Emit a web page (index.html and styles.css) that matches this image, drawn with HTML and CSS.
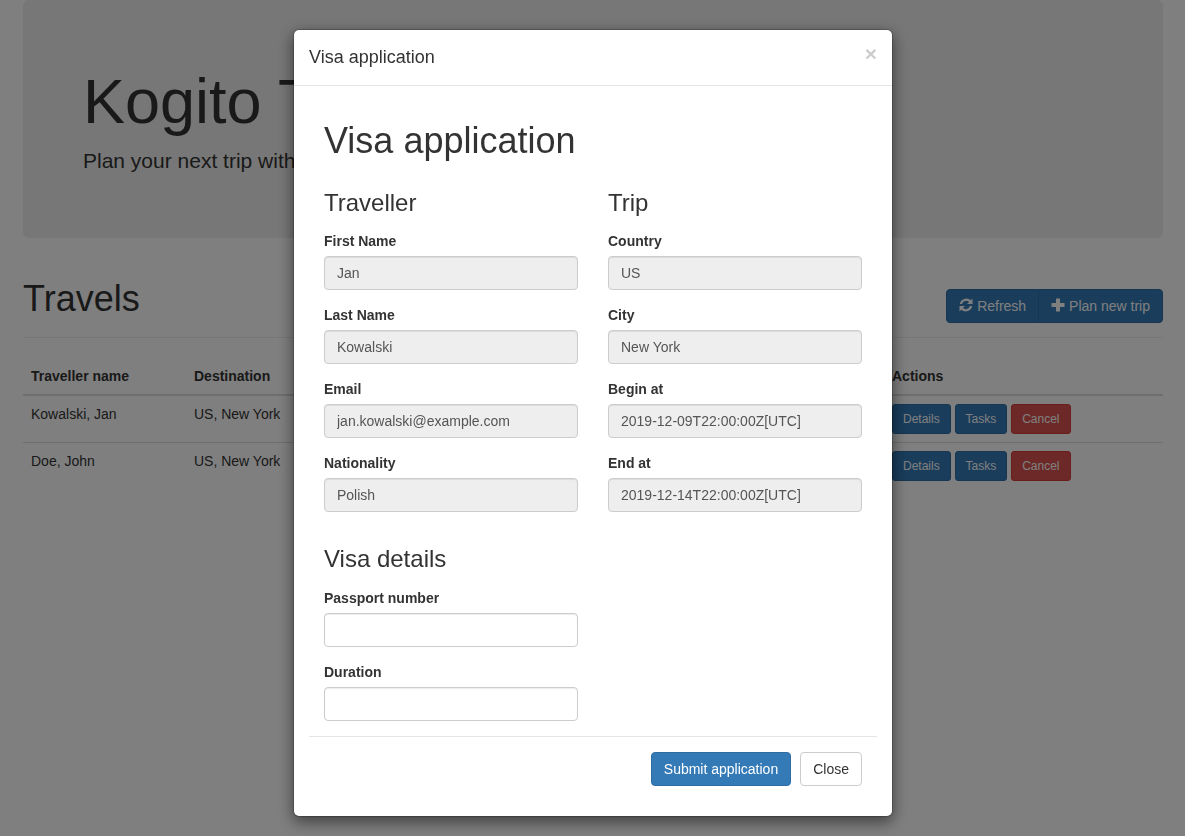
FILE: index.html
```html
<!DOCTYPE html>
<html lang="en">
<head>
    <meta charset="UTF-8">
    <meta name="viewport" content="width=device-width, initial-scale=1.0">
    <title>Kogito Travel Agency</title>
    <link rel="stylesheet" href="styles.css">
</head>
<body>
    <div class="container">
        <div class="jumbotron">
            <h1>Kogito T</h1>
            <p>Plan your next trip with</p>
        </div>

        <div class="page-header">
            <h1>Travels</h1>
            <div class="btn-group">
                <button type="button" class="btn btn-primary">
                    <svg class="glyph" viewBox="0 0 14 14"><path d="M13.5.5V6H8l2.100-2.100A4.400 4.400 0 0 0 3 5.900H.8A6.600 6.600 0 0 1 11.700 2.300z"/><path d="M.5 13.500V8H6l-2.100 2.100A4.400 4.400 0 0 0 11 8.100h2.200A6.600 6.600 0 0 1 2.300 11.700z"/></svg>
                    Refresh
                </button>
                <button type="button" class="btn btn-primary">
                    <svg class="glyph" viewBox="0 0 14 14"><path d="M5 .5h4v4.500h4.500v4H9v4.500H5V9H.5V5H5z"/></svg>
                    Plan new trip
                </button>
            </div>
        </div>

        <table class="table">
            <thead>
                <tr>
                    <th class="col-name">Traveller name</th>
                    <th class="col-dest">Destination</th>
                    <th class="col-dates">Departure</th>
                    <th class="col-actions">Actions</th>
                </tr>
            </thead>
            <tbody>
                <tr>
                    <td>Kowalski, Jan</td>
                    <td>US, New York</td>
                    <td>2019-12-09</td>
                    <td class="actions">
                        <button type="button" class="btn btn-sm btn-primary">Details</button>
                        <button type="button" class="btn btn-sm btn-primary">Tasks</button>
                        <button type="button" class="btn btn-sm btn-danger">Cancel</button>
                    </td>
                </tr>
                <tr>
                    <td>Doe, John</td>
                    <td>US, New York</td>
                    <td>2019-12-09</td>
                    <td class="actions">
                        <button type="button" class="btn btn-sm btn-primary">Details</button>
                        <button type="button" class="btn btn-sm btn-primary">Tasks</button>
                        <button type="button" class="btn btn-sm btn-danger">Cancel</button>
                    </td>
                </tr>
            </tbody>
        </table>
    </div>

    <div class="modal-backdrop"></div>

    <div class="modal">
        <div class="modal-content">
            <div class="modal-header">
                <button type="button" class="close">&times;</button>
                <h4 class="modal-title">Visa application</h4>
            </div>
            <div class="modal-body">
                <form>
                    <div class="form-inner">
                        <h1>Visa application</h1>
                        <div class="form-columns">
                            <div>
                                <h3>Traveller</h3>
                                <div class="form-group">
                                    <label for="firstName">First Name</label>
                                    <input type="text" id="firstName" class="form-control" value="Jan" readonly>
                                </div>
                                <div class="form-group">
                                    <label for="lastName">Last Name</label>
                                    <input type="text" id="lastName" class="form-control" value="Kowalski" readonly>
                                </div>
                                <div class="form-group">
                                    <label for="email">Email</label>
                                    <input type="text" id="email" class="form-control" value="jan.kowalski@example.com" readonly>
                                </div>
                                <div class="form-group">
                                    <label for="nationality">Nationality</label>
                                    <input type="text" id="nationality" class="form-control" value="Polish" readonly>
                                </div>
                            </div>
                            <div>
                                <h3>Trip</h3>
                                <div class="form-group">
                                    <label for="country">Country</label>
                                    <input type="text" id="country" class="form-control" value="US" readonly>
                                </div>
                                <div class="form-group">
                                    <label for="city">City</label>
                                    <input type="text" id="city" class="form-control" value="New York" readonly>
                                </div>
                                <div class="form-group">
                                    <label for="beginAt">Begin at</label>
                                    <input type="text" id="beginAt" class="form-control" value="2019-12-09T22:00:00Z[UTC]" readonly>
                                </div>
                                <div class="form-group">
                                    <label for="endAt">End at</label>
                                    <input type="text" id="endAt" class="form-control" value="2019-12-14T22:00:00Z[UTC]" readonly>
                                </div>
                            </div>
                        </div>
                        <div class="form-columns visa-details">
                            <div>
                                <h3>Visa details</h3>
                                <div class="form-group">
                                    <label for="passport">Passport number</label>
                                    <input type="text" id="passport" class="form-control">
                                </div>
                                <div class="form-group">
                                    <label for="duration">Duration</label>
                                    <input type="text" id="duration" class="form-control">
                                </div>
                            </div>
                        </div>
                    </div>
                    <div class="modal-footer">
                        <button type="button" class="btn btn-primary">Submit application</button>
                        <button type="button" class="btn btn-default">Close</button>
                    </div>
                </form>
            </div>
        </div>
    </div>
</body>
</html>
```

FILE: styles.css
```css
* {
    box-sizing: border-box;
}
body {
    margin: 0;
    font-family: "Liberation Sans", Arial, sans-serif;
    font-size: 14px;
    line-height: 20px;
    color: #333;
    background-color: #fff;
    overflow: hidden;
}
h1, h3, h4, p {
    font-weight: 500;
    margin: 0;
}
.container {
    width: 1140px;
    margin-left: 23px;
}
.jumbotron {
    height: 238px;
    padding: 67px 60px 0;
    background-color: #eee;
    border-radius: 6px;
}
.jumbotron h1 {
    font-size: 63px;
    line-height: 69px;
    margin-bottom: 10px;
}
.jumbotron p {
    font-size: 21px;
    font-weight: 200;
    line-height: 30px;
}
.page-header {
    display: flex;
    justify-content: space-between;
    align-items: flex-start;
    margin: 40px 0 20px;
    padding-bottom: 9px;
    border-bottom: 1px solid #eee;
}
.page-header h1 {
    font-size: 36px;
    line-height: 40px;
    margin: 1px 0 9px;
}
.btn {
    display: inline-block;
    padding: 6px 12px;
    font-family: inherit;
    font-size: 14px;
    line-height: 20px;
    border: 1px solid transparent;
    border-radius: 4px;
    white-space: nowrap;
    cursor: pointer;
}
.btn-primary {
    color: #fff;
    background-color: #337ab7;
    border-color: #2e6da4;
}
.btn-danger {
    color: #fff;
    background-color: #d9534f;
    border-color: #d43f3a;
}
.btn-default {
    color: #333;
    background-color: #fff;
    border-color: #ccc;
}
.btn-sm {
    padding: 5px 10px;
    font-size: 12px;
    line-height: 18px;
    border-radius: 3px;
}
.btn-group {
    display: flex;
    margin-top: 11px;
}
.btn-group .btn:first-child {
    border-radius: 4px 0 0 4px;
}
.btn-group .btn:last-child {
    border-radius: 0 4px 4px 0;
    margin-left: -1px;
}
.glyph {
    width: 14px;
    height: 14px;
    fill: currentColor;
    vertical-align: -1px;
}
.table {
    width: 100%;
    table-layout: fixed;
    border-collapse: collapse;
}
.table th,
.table td {
    padding: 8px;
    text-align: left;
    vertical-align: top;
}
.table th {
    border-bottom: 2px solid #ddd;
}
.table td {
    border-top: 1px solid #ddd;
}
.col-name {
    width: 163px;
}
.col-dest {
    width: 300px;
}
.col-dates {
    width: 398px;
}
.actions {
    white-space: nowrap;
}
.modal-backdrop {
    position: fixed;
    top: 0;
    right: 0;
    bottom: 0;
    left: 0;
    background-color: #000;
    opacity: 0.5;
}
.modal {
    position: fixed;
    top: 0;
    right: 0;
    bottom: 0;
    left: 0;
    overflow: hidden;
}
.modal-content {
    width: 600px;
    margin: 29px 0 30px 293px;
    background-color: #fff;
    border: 1px solid rgba(0, 0, 0, 0.2);
    border-radius: 6px;
    box-shadow: 0 5px 15px rgba(0, 0, 0, 0.5);
    background-clip: padding-box;
}
.modal-header {
    padding: 15px;
    border-bottom: 1px solid #e5e5e5;
}
.modal-title {
    font-size: 18px;
    line-height: 25px;
}
.close {
    float: right;
    margin-top: -2px;
    padding: 0;
    font-family: inherit;
    font-size: 21px;
    font-weight: 700;
    line-height: 1;
    color: #000;
    text-shadow: 0 1px 0 #fff;
    background: transparent;
    border: 0;
    opacity: 0.2;
    cursor: pointer;
}
.modal-body {
    padding: 15px;
}
.form-inner {
    padding: 0 15px;
}
.form-inner h1 {
    font-size: 36px;
    line-height: 40px;
    margin: 20px 0 10px;
}
.form-columns {
    display: grid;
    grid-template-columns: 254px 254px;
    column-gap: 30px;
}
.form-inner h3 {
    font-size: 24px;
    line-height: 26px;
    margin: 19px 0 15px;
}
.visa-details h3 {
    margin-bottom: 16px;
}
.form-group {
    margin-bottom: 15px;
}
label {
    display: block;
    margin-bottom: 5px;
    font-weight: 700;
}
.form-control {
    display: block;
    width: 100%;
    height: 34px;
    padding: 6px 12px;
    font-family: inherit;
    font-size: 14px;
    line-height: 20px;
    color: #555;
    background-color: #fff;
    border: 1px solid #ccc;
    border-radius: 4px;
    box-shadow: inset 0 1px 1px rgba(0, 0, 0, 0.075);
    outline: none;
}
.form-control[readonly] {
    background-color: #eee;
}
.modal-footer {
    display: flex;
    justify-content: flex-end;
    gap: 9px;
    padding: 15px;
    border-top: 1px solid #e5e5e5;
}
```
